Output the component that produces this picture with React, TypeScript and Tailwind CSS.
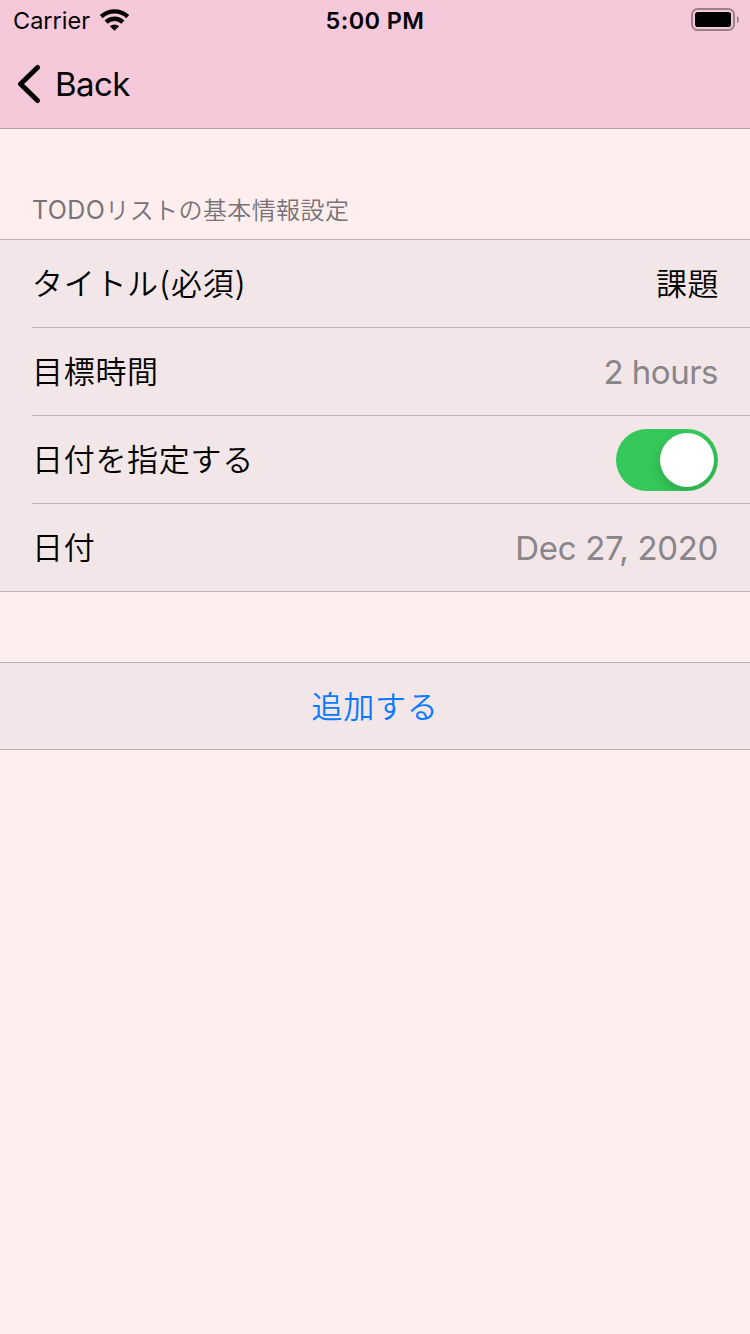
import React from "react";

function Row({ label, last, children }: { label: React.ReactNode; last?: boolean; children: React.ReactNode }) {
  return (
    <div className="pl-8">
      <div className={`flex items-center justify-between pr-8 ${last ? "h-[87px]" : "h-[88px] border-b border-[#bcb1b5]"}`}>
        <span className="whitespace-nowrap text-[31px] font-[350] leading-none tracking-[0.7px]">{label}</span>
        {children}
      </div>
    </div>
  );
}

export default function App() {
  return (
    <div className="flex h-[1334px] w-[750px] flex-col overflow-hidden bg-[#ffeeed] font-['Inter','Noto_Sans_CJK_JP',sans-serif] text-black">
      <header className="h-[129px] border-b border-[#b3a0a8] bg-[#f6c9da]">
        <div className="grid h-10 grid-cols-3 items-center pl-[13px] pr-[11px]">
          <div className="flex items-center gap-[10px]">
            <span className="pt-[2px] text-[23.5px] leading-none">Carrier</span>
            <svg width="30" height="22" viewBox="0 0 30 22" fill="none" stroke="black" strokeWidth="4.4">
              <path d="M1.3 7.6A19.4 19.4 0 0 1 27.7 7.6" />
              <path d="M6.1 13.1A12.3 12.3 0 0 1 22.9 13.1" />
              <path d="M9.9 17.3A7 7 0 0 1 19.1 17.3L14.5 21.8Z" fill="black" stroke="none" />
            </svg>
          </div>
          <span className="-ml-[2px] pt-[2px] text-center text-[23.5px] font-semibold leading-none tracking-[0.4px]">5:00 PM</span>
          <svg className="justify-self-end" width="50" height="24" viewBox="0 0 50 24">
            <rect x="3" y="1" width="42" height="21" rx="5.5" fill="none" stroke="#9b7f8a" strokeWidth="2" />
            <rect x="6" y="4" width="36" height="15" rx="2.8" fill="black" />
            <path d="M48 8Q50 9 50 11.5T48 15Z" fill="#9b7f8a" />
          </svg>
        </div>
        <div className="flex h-[88px] items-center gap-[14px] pl-[17px]">
          <svg width="24" height="40" viewBox="0 0 24 40" fill="none" stroke="black" strokeWidth="5" strokeLinecap="round" strokeLinejoin="round">
            <path d="M20.5 3.5L3.5 20L20.5 36.5" />
          </svg>
          <span className="pt-[1px] text-[33px] font-[380] leading-none tracking-[-0.6px]">Back</span>
        </div>
      </header>
      <h2 className="h-[110px] pl-[32px] pt-[67px] text-[24px] font-[350] leading-[28px] tracking-[0.4px] text-[#76747a]">
        <span className="text-[25px] font-normal tracking-[0.4px]">TODO</span>リストの基本情報設定
      </h2>
      <section className="border-y border-[#bcb1b5] bg-[#f2e6e8]">
        <Row label={<>タイトル<span className="text-[33px]">(</span>必須<span className="text-[33px]">)</span></>}>
          <span className="-mr-[1px] text-[31px] font-[350] leading-none tracking-[0.5px]">課題</span>
        </Row>
        <Row label="目標時間">
          <span className="pt-[1px] text-[33px] font-[380] leading-none tracking-[-0.5px] text-[#89858a]">2 hours</span>
        </Row>
        <Row label="日付を指定する">
          <button role="switch" aria-checked="true" className="flex h-[62px] w-[102px] items-center justify-end overflow-hidden rounded-full bg-[#35c759] p-1">
            <span className="size-[54px] rounded-full bg-white shadow-[0_5px_12px_rgba(0,0,0,0.16)]" />
          </button>
        </Row>
        <Row label="日付" last>
          <span className="pt-[1px] text-[33px] font-[380] leading-none tracking-[-0.32px] text-[#89858a]">Dec 27, 2020</span>
        </Row>
      </section>
      <button className="mt-[70px] h-[88px] border-y border-[#bcb1b5] bg-[#f2e6e8] text-[31px] font-[350] leading-none tracking-[0.7px] text-[#087aff]">追加する</button>
    </div>
  );
}
